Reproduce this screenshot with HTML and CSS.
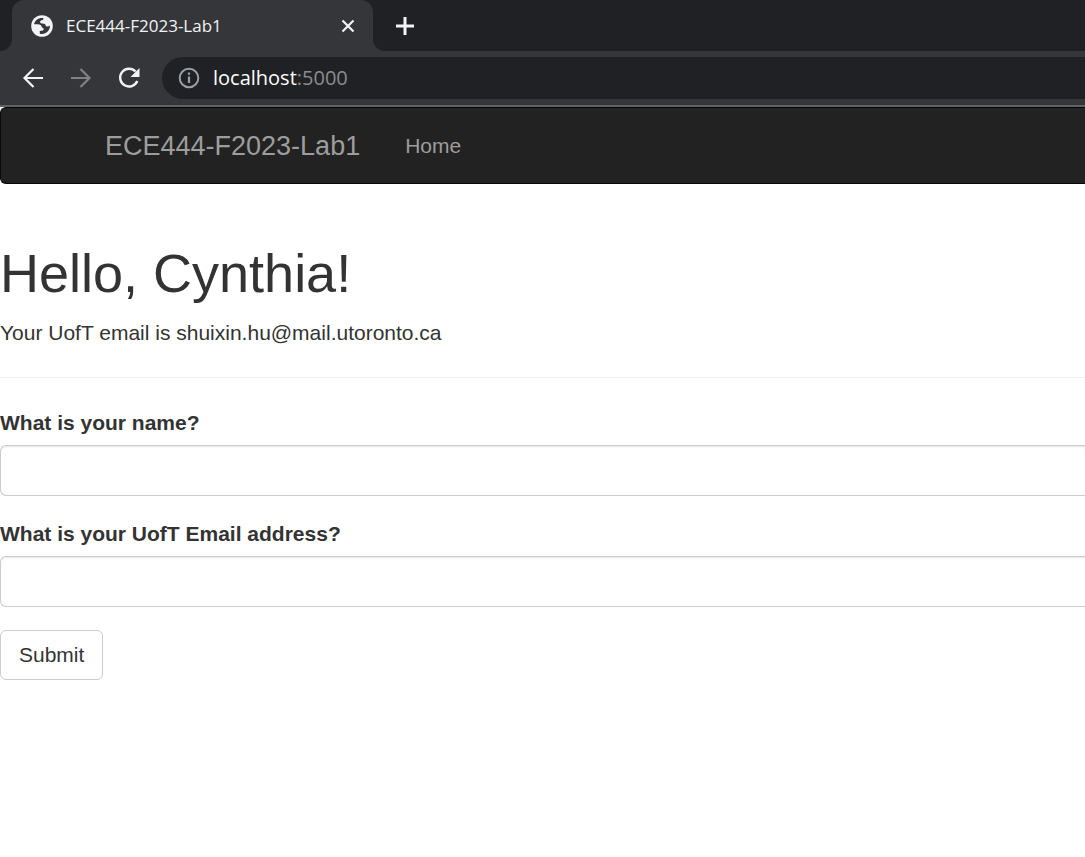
FILE: index.html
```html
<!DOCTYPE html>
<html lang="en">
<head>
<meta charset="utf-8">
<meta name="viewport" content="width=device-width, initial-scale=1">
<title>ECE444-F2023-Lab1</title>
<link rel="stylesheet" href="styles.css">
</head>
<body>
<header class="browser">
  <div class="tab-strip">
    <div class="strip-edge"></div>
    <div class="tab">
      <svg class="favicon" viewBox="0 0 22 22" aria-hidden="true">
        <circle cx="11" cy="11" r="10.8" fill="#f1f3f4"/>
        <path d="M12.500 3.200C8 2.400 4 5 3 9.300L6.500 9.200C9.500 9.200 11 10.500 10.800 12.600C13 12.800 13.200 14.500 12 15.500L8.800 16V18.700C14.500 20 19 16 19 10.500C17.500 12 14.500 12 14.300 9.500C14 8.300 11 9 9.500 8C8.300 6.500 9.500 5.200 12 5Z" fill="#35363a"/>
      </svg>
      <span class="tab-title">ECE444-F2023-Lab1</span>
      <button class="tab-close" type="button" aria-label="Close tab">
        <svg viewBox="0 0 14 14"><path d="M1.500 1.500l11 11M12.500 1.500l-11 11" stroke="currentColor" stroke-width="2.200"/></svg>
      </button>
    </div>
    <div class="strip-rest">
      <button class="new-tab" type="button" aria-label="New tab">
        <svg viewBox="0 0 18 18"><path d="M9 0v18M0 9h18" stroke="currentColor" stroke-width="3"/></svg>
      </button>
    </div>
  </div>
  <div class="toolbar">
    <button class="tool" type="button" aria-label="Back">
      <svg viewBox="0 0 24 24"><path d="M22 12H3.500M12.500 3L3.500 12l9 9" fill="none" stroke="currentColor" stroke-width="2.200"/></svg>
    </button>
    <button class="tool tool-disabled" type="button" aria-label="Forward" disabled>
      <svg viewBox="0 0 24 24"><path d="M2 12h18.500M11.500 3l9 9-9 9" fill="none" stroke="currentColor" stroke-width="2.200"/></svg>
    </button>
    <button class="tool" type="button" aria-label="Reload">
      <svg viewBox="0 0 24 24"><path d="M18.500 5.500A8.900 8.900 0 1 0 20.300 15" fill="none" stroke="currentColor" stroke-width="2.400"/><path d="M22.500 2v9h-9z" fill="currentColor"/></svg>
    </button>
    <div class="omnibox">
      <svg class="info" viewBox="0 0 22 22" aria-hidden="true"><circle cx="11" cy="11" r="9.300" fill="none" stroke="currentColor" stroke-width="2"/><path d="M11 9.500v6.500M11 5.500v2.300" stroke="currentColor" stroke-width="2.200"/></svg>
      <div class="url" role="textbox" aria-label="Address" contenteditable="true" spellcheck="false">localhost<span class="port">:5000</span></div>
    </div>
  </div>
</header>
<nav class="navbar">
  <a class="brand" href="#">ECE444-F2023-Lab1</a>
  <a class="nav-link" href="#">Home</a>
</nav>
<main class="page">
  <h1 class="greeting">Hello, Cynthia!</h1>
  <p class="email">Your UofT email is shuixin.hu@mail.utoronto.ca</p>
  <hr class="rule">
  <form class="form">
    <div class="field">
      <label class="label" for="name">What is your name?</label>
      <input class="input" id="name" type="text">
    </div>
    <div class="field">
      <label class="label" for="email">What is your UofT Email address?</label>
      <input class="input" id="email" type="text">
    </div>
    <button class="submit" type="submit">Submit</button>
  </form>
</main>
</body>
</html>
```

FILE: styles.css
```css
* {
  box-sizing: border-box;
}

body {
  margin: 0;
  background: #fff;
  color: #333;
  font: 21px/30px "Liberation Sans", Arial, sans-serif;
}

button {
  padding: 0;
  border: 0;
  background: none;
  color: inherit;
  font: inherit;
}

svg {
  display: block;
  width: 100%;
}

.browser {
  border-bottom: 2px solid #616266;
  background: #35363a;
  color: #f1f3f4;
  font-family: "Open Sans", "Noto Sans", sans-serif;
}

.tab-strip {
  display: flex;
  height: 51px;
  background: linear-gradient(#202124 50%, #35363a 50%);
}

.strip-edge {
  width: 12px;
  border-bottom-right-radius: 12px;
  background: #202124;
}

.tab {
  display: flex;
  align-items: center;
  width: 361px;
  padding: 0 18px 0 19px;
  border-radius: 12px 12px 0 0;
  background: #35363a;
}

.favicon {
  width: 22px;
  height: 22px;
}

.tab-title {
  flex: 1;
  margin-left: 13px;
  font-size: 17px;
}

.tab-close {
  width: 14px;
}

.strip-rest {
  display: flex;
  flex: 1;
  align-items: center;
  padding-left: 23px;
  border-bottom-left-radius: 12px;
  background: #202124;
}

.new-tab {
  width: 18px;
}

.toolbar {
  display: flex;
  align-items: center;
  gap: 24px;
  padding: 6px 0 6px 21px;
}

.tool {
  width: 24px;
}

.tool-disabled {
  color: #808185;
}

.omnibox {
  display: flex;
  flex: 1;
  align-items: center;
  gap: 13px;
  min-height: 42px;
  margin-left: -3px;
  padding-left: 16px;
  border-radius: 21px 0 0 21px;
  background: #202124;
}

.info {
  width: 22px;
  color: #9aa0a6;
}

.url {
  flex: 1;
  color: #fff;
  font-size: 20px;
}

.port {
  color: #8b8c8f;
}

.navbar {
  display: flex;
  align-items: center;
  gap: 45px;
  min-height: 77px;
  padding-left: 104px;
  border: 1px solid #080808;
  border-right: 0;
  border-radius: 6px 0 0 6px;
  background: #222;
}

.brand,
.nav-link {
  color: #9d9d9d;
  text-decoration: none;
}

.brand {
  font-size: 27px;
}

.page {
  padding-top: 60px;
}

.greeting {
  margin: 0 0 15px;
  font-size: 54px;
  font-weight: 400;
  line-height: 59px;
}

.email {
  margin: 0;
}

.rule {
  margin: 29px 0 30px;
  border: 0;
  border-top: 1px solid #eee;
}

.field {
  margin-bottom: 23px;
}

.label {
  display: block;
  margin-bottom: 7px;
  font-weight: 700;
}

.input {
  display: block;
  width: 100%;
  height: 51px;
  padding: 9px 18px;
  border: 1px solid #ccc;
  border-right: 0;
  border-radius: 6px 0 0 6px;
  background: #fff;
  box-shadow: inset 0 2px 2px -1px rgba(0, 0, 0, 0.1);
  color: #555;
  font: inherit;
}

.submit {
  padding: 9px 18px;
  border: 1px solid #ccc;
  border-radius: 6px;
  background: #fff;
}
```
